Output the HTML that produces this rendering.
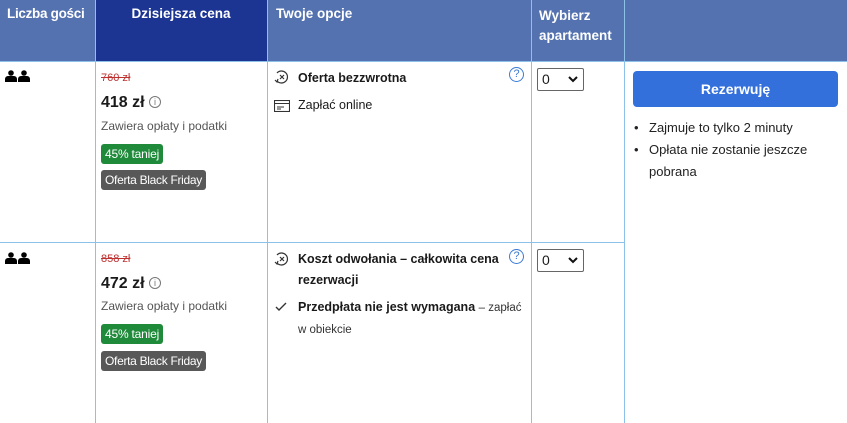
<!DOCTYPE html><html><head><meta charset="utf-8"><style>
*{margin:0;padding:0;box-sizing:border-box}
body{width:847px;height:423px;background:#fff;font-family:"Liberation Sans",sans-serif;color:#1a1a1a;position:relative;overflow:hidden;font-size:13px}
.a{position:absolute}
.hd{background:#5472b0;color:#fff;font-weight:bold;font-size:13.5px}
.vl{position:absolute;width:1px;background:#8cc1ea}
.hl{position:absolute;height:1px;background:#8cc1ea}
.old{color:#c0302f;text-decoration:line-through;font-size:11px}
.price{font-size:16px;font-weight:bold}
.sm{font-size:12px;color:#555}
.g{background:#1f8a3a;color:#fff;font-size:12px;padding:3px 4px;border-radius:3px;letter-spacing:-0.2px}
.bf{background:#585858;color:#fff;font-size:12px;padding:3px 4px;border-radius:3px;letter-spacing:-0.3px}
.sel{width:47px;height:23px;border:1px solid #666;border-radius:2px;font-size:14px;padding:2px 0 0 4px}
.b{font-weight:bold}
</style></head><body>
<div class="a hd" style="left:0;top:0;width:847px;height:61px"></div>
<div class="a" style="left:95px;top:0;width:172px;height:61px;background:#1c3592"></div>
<div class="a hd" style="left:7px;top:6px;background:none;letter-spacing:-0.3px">Liczba gości</div>
<div class="a hd" style="left:95px;top:6px;width:172px;text-align:center;background:none">Dzisiejsza cena</div>
<div class="a hd" style="left:276px;top:6px;background:none">Twoje opcje</div>
<div class="a hd" style="left:539px;top:6px;background:none;line-height:20px">Wybierz<br>apartament</div>
<div class="hl" style="left:0;top:61px;width:847px"></div>
<div class="hl" style="left:0;top:242px;width:624px"></div>
<div class="vl" style="left:95px;top:0;height:423px"></div>
<div class="vl" style="left:267px;top:0;height:423px"></div>
<div class="vl" style="left:531px;top:0;height:423px"></div>
<div class="vl" style="left:624px;top:0;height:423px"></div>

<svg class="a" style="left:5px;top:70px" width="26" height="12"><circle cx="6" cy="3" r="2.8"/><path d="M0 12v-3a3 3 0 0 1 3-3h6a3 3 0 0 1 3 3v3z"/><circle cx="19" cy="3" r="2.8"/><path d="M13 12v-3a3 3 0 0 1 3-3h6a3 3 0 0 1 3 3v3z"/></svg>
<svg class="a" style="left:5px;top:252px" width="26" height="12"><circle cx="6" cy="3" r="2.8"/><path d="M0 12v-3a3 3 0 0 1 3-3h6a3 3 0 0 1 3 3v3z"/><circle cx="19" cy="3" r="2.8"/><path d="M13 12v-3a3 3 0 0 1 3-3h6a3 3 0 0 1 3 3v3z"/></svg>

<div class="a old" style="left:101px;top:72px">760 zł</div>
<div class="a price" style="left:101px;top:94px">418 zł <span style="display:inline-block;width:12px;height:12px;border:1px solid #777;border-radius:50%;font-size:9px;font-weight:normal;color:#777;text-align:center;line-height:11px;vertical-align:2px">i</span></div>
<div class="a sm" style="left:101px;top:119px">Zawiera opłaty i podatki</div>
<div class="a g" style="left:101px;top:144px">45% taniej</div>
<div class="a bf" style="left:101px;top:170px">Oferta Black Friday</div>

<div class="a old" style="left:101px;top:253px">858 zł</div>
<div class="a price" style="left:101px;top:275px">472 zł <span style="display:inline-block;width:12px;height:12px;border:1px solid #777;border-radius:50%;font-size:9px;font-weight:normal;color:#777;text-align:center;line-height:11px;vertical-align:2px">i</span></div>
<div class="a sm" style="left:101px;top:299px">Zawiera opłaty i podatki</div>
<div class="a g" style="left:101px;top:324px">45% taniej</div>
<div class="a bf" style="left:101px;top:351px">Oferta Black Friday</div>

<svg class="a" style="left:274px;top:69px" width="16" height="16" fill="none" stroke="#333" stroke-width="1.2"><path d="M3 12A6 6 0 1 0 3 4"/><path d="M6 6l4 4M10 6l-4 4"/><path d="M1 11l2 2 1-3"/></svg>
<div class="a b" style="left:298px;top:71px;font-size:12.5px">Oferta bezzwrotna</div>
<div class="a" style="left:509px;top:67px;width:15px;height:15px;border:1px solid #3a7bd5;border-radius:50%;color:#3a7bd5;font-size:11px;text-align:center;line-height:13px">?</div>
<svg class="a" style="left:274px;top:100px" width="16" height="12" fill="none" stroke="#333" stroke-width="1.1"><rect x="0.5" y="0.5" width="15" height="11"/><path d="M0 3.5h16M3 7h7M3 9h4"/></svg>
<div class="a" style="left:298px;top:98px;font-size:12.5px">Zapłać online</div>

<svg class="a" style="left:274px;top:251px" width="16" height="16" fill="none" stroke="#333" stroke-width="1.2"><path d="M3 12A6 6 0 1 0 3 4"/><path d="M6 6l4 4M10 6l-4 4"/><path d="M1 11l2 2 1-3"/></svg>
<div class="a b" style="left:298px;top:249px;font-size:12.5px;line-height:21px;width:210px">Koszt odwołania – całkowita cena rezerwacji</div>
<div class="a" style="left:509px;top:249px;width:15px;height:15px;border:1px solid #3a7bd5;border-radius:50%;color:#3a7bd5;font-size:11px;text-align:center;line-height:13px">?</div>
<svg class="a" style="left:275px;top:302px" width="12" height="10" fill="none" stroke="#333" stroke-width="1.4"><path d="M1 5l3 3 7-7"/></svg>
<div class="a" style="left:298px;top:297px;font-size:12.5px;line-height:21px;width:225px"><b>Przedpłata nie jest wymagana</b> <span style="font-size:11.5px;color:#333">– zapłać w obiekcie</span></div>

<div class="a sel" style="left:537px;top:68px">0<svg style="position:absolute;right:5px;top:7px" width="10" height="7" fill="none" stroke="#111" stroke-width="2"><path d="M1 1l4 4 4-4"/></svg></div>
<div class="a sel" style="left:537px;top:249px">0<svg style="position:absolute;right:5px;top:7px" width="10" height="7" fill="none" stroke="#111" stroke-width="2"><path d="M1 1l4 4 4-4"/></svg></div>

<div class="a" style="left:633px;top:71px;width:205px;height:36px;background:#3470dc;border-radius:4px;color:#fff;font-weight:bold;font-size:14px;text-align:center;line-height:36px">Rezerwuję</div>
<div class="a" style="left:634px;top:117px;font-size:13px;line-height:22px;color:#222">
<div><span style="position:absolute;left:0">•</span><span style="padding-left:15px">Zajmuje to tylko 2 minuty</span></div>
<div><span style="position:absolute;left:0">•</span><span style="padding-left:15px">Opłata nie zostanie jeszcze</span></div>
<div style="padding-left:15px">pobrana</div></div>
</body></html>
